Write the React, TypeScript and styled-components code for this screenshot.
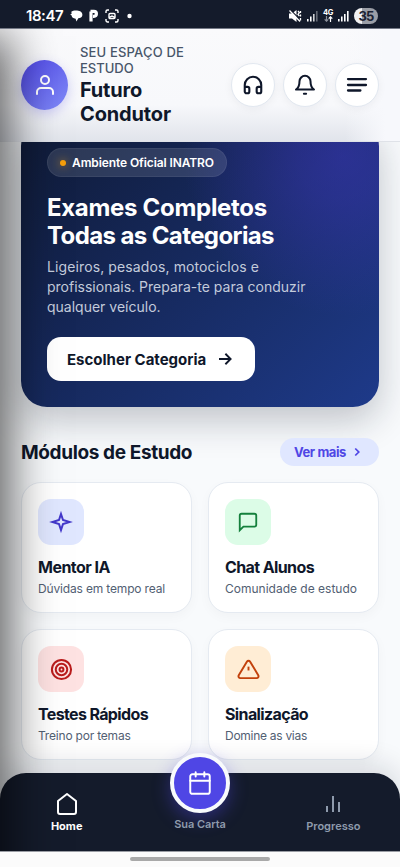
import React from "react";
import styled, { createGlobalStyle } from "styled-components";

const GlobalStyle = createGlobalStyle`
  * { box-sizing: border-box; }
  body { margin: 0; background: #fafafa; font-family: Inter, "Open Sans", sans-serif; }
  button { font: inherit; border: 0; padding: 0; margin: 0; }
  h1, h2, h3, p { margin: 0; }
`;

const Screen = styled.div`
  position: relative;
  display: flex;
  flex-direction: column;
  width: 400px;
  height: 867px;
  overflow: hidden;
  background: #fafafa;
  color: #0f172a;
`;

/* ---------- status bar ---------- */

const StatusBar = styled.div`
  position: relative;
  z-index: 5;
  flex: none;
  height: 28px;
  display: flex;
  align-items: center;
  justify-content: space-between;
  padding: 3px 22px 0 26px;
  background: #141b2b;
  color: #fff;
  box-shadow: 0 1px 0 #747986;
`;

const StatusGroup = styled.div<{ $gap: number }>`
  display: flex;
  align-items: center;
  gap: ${(p) => p.$gap}px;
`;

const Clock = styled.span`
  width: 38px;
  font-size: 15px;
  font-weight: 600;
  letter-spacing: -0.45px;
  line-height: 18px;
`;

const Battery = styled.span`
  width: 24px;
  height: 16px;
  border-radius: 8px;
  background: linear-gradient(90deg, #f1f1f3 0 35%, #9b9ea6 35% 100%);
  color: #1b2232;
  font-size: 13px;
  font-weight: 700;
  letter-spacing: -0.8px;
  line-height: 16px;
  text-align: center;
`;

const NetworkType = styled.span`
  display: flex;
  flex-direction: column;
  align-items: center;
  width: 10px;
  font-size: 7.5px;
  font-weight: 700;
  letter-spacing: -0.3px;
  line-height: 7px;
`;

/* ---------- header ---------- */

const Header = styled.header`
  position: relative;
  z-index: 2;
  flex: none;
  height: 114px;
  display: flex;
  align-items: center;
  padding: 0 21px;
  border-bottom: 1px solid #dfe2e8;
  background:
    linear-gradient(90deg, transparent 345px, #f7f8fc 385px),
    linear-gradient(180deg, #fafafc 0, #f7f8fb 68%, #eceef3 84%, #e1e4eb 100%);
`;

const Avatar = styled.div`
  flex: none;
  display: grid;
  place-items: center;
  width: 47px;
  height: 50px;
  border-radius: 50%;
  background: linear-gradient(135deg, #4f46e5, #818cf8);
  color: #fff;
  box-shadow: 0 4px 12px rgba(79, 70, 229, 0.25);
`;

const Greeting = styled.div`
  width: 130px;
  margin-left: 12px;
`;

const Line = styled.span<{ $ls?: number }>`
  display: block;
  white-space: nowrap;
  letter-spacing: ${(p) => p.$ls ?? 0}px;
`;

const Eyebrow = styled.p`
  font-size: 13px;
  font-weight: 500;
  line-height: 16px;
  color: #475569;
`;

const UserName = styled.h1`
  margin-top: 2px;
  font-size: 20px;
  font-weight: 700;
  line-height: 24px;
`;

const Actions = styled.div`
  display: flex;
  gap: 8px;
  margin-left: auto;
`;

const RoundButton = styled.button`
  display: grid;
  place-items: center;
  width: 44px;
  height: 44px;
  border: 1px solid #e2e8f0;
  border-radius: 50%;
  background: #fff;
  color: #0f172a;
  box-shadow: 0 2px 8px rgba(15, 23, 42, 0.05);
`;

/* ---------- hero ---------- */

const Content = styled.main`
  flex: none;
  height: 631px;
  padding: 0 21px;
  background: #f8fafc;
`;

const Hero = styled.section`
  height: 287px;
  margin-top: -22px;
  padding: 28px 26px 0;
  border-radius: 26px;
  color: #fff;
  background:
    radial-gradient(circle at 322px 36px, rgba(67, 56, 202, 0.45) 0, rgba(67, 56, 202, 0.36) 45px, transparent 160px),
    linear-gradient(135deg, #0f1a35 0%, #1e3a8a 100%);
  box-shadow: 0 14px 36px rgba(15, 23, 42, 0.24);
`;

const Badge = styled.div`
  display: inline-flex;
  align-items: center;
  gap: 6px;
  width: 180px;
  height: 29px;
  padding-left: 12px;
  border: 1px solid rgba(255, 255, 255, 0.06);
  border-radius: 15px;
  background: rgba(255, 255, 255, 0.12);
  font-size: 12px;
  font-weight: 600;
`;

const BadgeDot = styled.i`
  width: 6px;
  height: 6px;
  border-radius: 50%;
  background: #f59e0b;
  box-shadow: 0 0 8px rgba(245, 158, 11, 0.7);
`;

const HeroTitle = styled.h2`
  margin-top: 17px;
  font-size: 24px;
  font-weight: 700;
  line-height: 28px;
`;

const HeroText = styled.p`
  margin-top: 7px;
  font-size: 14px;
  line-height: 19.8px;
  color: #c3cbdb;
`;

const HeroButton = styled.button`
  display: flex;
  align-items: center;
  gap: 10px;
  width: 208px;
  height: 44px;
  margin-top: 21px;
  padding-left: 20px;
  border-radius: 14px;
  background: #fff;
  color: #0f172a;
  font-size: 15px;
  font-weight: 700;
`;

/* ---------- modules ---------- */

const SectionHead = styled.div`
  display: flex;
  align-items: center;
  justify-content: space-between;
  height: 28px;
  margin: 31px 0 16px;
`;

const SectionTitle = styled.h2`
  padding-top: 2px;
  font-size: 19px;
  font-weight: 700;
  line-height: 28px;
`;

const MoreButton = styled.button`
  display: flex;
  align-items: center;
  gap: 4px;
  width: 99px;
  height: 28px;
  padding-left: 14px;
  border-radius: 14px;
  background: #e0e7ff;
  color: #4f46e5;
  font-size: 13px;
  font-weight: 700;
`;

const ModuleGrid = styled.div`
  display: grid;
  grid-template-columns: 1fr 1fr;
  grid-auto-rows: 131px;
  gap: 16px;
`;

const ModuleCard = styled.article`
  padding: 16px;
  border: 1px solid #e5eaf1;
  border-radius: 20px;
  background: #fff;
  box-shadow: 0 4px 12px rgba(15, 23, 42, 0.03);
`;

const ModuleIcon = styled.div<{ $bg: string; $fg: string }>`
  display: grid;
  place-items: center;
  width: 46px;
  height: 46px;
  border-radius: 13px;
  background: ${(p) => p.$bg};
  color: ${(p) => p.$fg};
`;

const ModuleTitle = styled.h3`
  margin-top: 12px;
  font-size: 16px;
  font-weight: 700;
  line-height: 21px;
`;

const ModuleText = styled.p`
  margin-top: 3px;
  font-size: 12px;
  line-height: 16px;
  color: #526073;
`;

/* ---------- bottom navigation ---------- */

const BottomNav = styled.nav`
  position: relative;
  height: 78px;
  display: grid;
  grid-template-columns: repeat(3, 1fr);
  border-radius: 26px 26px 0 0;
  background: #141b2b;
  box-shadow: 0 -8px 28px rgba(15, 23, 42, 0.14);
`;

const NavBackdrop = styled.div`
  flex: none;
  position: relative;
  z-index: 1;
  background: #f8fafc;
`;

const NavItem = styled.button<{ $active?: boolean }>`
  display: flex;
  flex-direction: column;
  align-items: center;
  padding-top: 19px;
  background: none;
  color: ${(p) => (p.$active ? "#fff" : "#8e9aac")};
  font-size: 11px;
  font-weight: ${(p) => (p.$active ? 700 : 600)};
  line-height: 14px;
`;

const NavGlyph = styled.span`
  display: grid;
  place-items: center;
  height: 24px;
  margin-bottom: 3px;
`;

const CenterItem = styled(NavItem)`
  padding-top: 0;
`;

const Fab = styled.span`
  display: grid;
  place-items: center;
  flex: none;
  width: 60px;
  height: 60px;
  margin: -20px 0 4px;
  border: 4px solid #f8fafc;
  border-radius: 50%;
  background: #4f46e5;
  color: #fff;
  box-shadow: 0 6px 18px rgba(79, 70, 229, 0.4);
`;

const GestureBar = styled.div`
  flex: none;
  position: relative;
  z-index: 3;
  height: 16px;
  display: flex;
  justify-content: center;
  padding-top: 5px;
  border-top: 1px solid #9a9da4;
  background: #fbfbfb;
`;

const GestureHandle = styled.i`
  width: 140px;
  height: 4px;
  border-radius: 2px;
  background: #a9a9a9;
`;

/* Closed side drawer: only its shadow reaches the visible page. */
const ClosedDrawer = styled.aside`
  position: absolute;
  z-index: 2;
  left: -300px;
  top: 36px;
  width: 300px;
  height: 880px;
  box-shadow: 10px 0 44px rgba(0, 0, 0, 0.64);
  pointer-events: none;
`;

/* ---------- icons ---------- */

type IconProps = { size?: number; stroke?: number; cap?: "round" | "butt"; children: React.ReactNode };

const Icon = ({ size = 22, stroke = 2, cap = "round", children }: IconProps) => (
  <svg width={size} height={size} viewBox="0 0 24 24" fill="none" stroke="currentColor"
    strokeWidth={stroke} strokeLinecap={cap} strokeLinejoin={cap === "round" ? "round" : "miter"}>
    {children}
  </svg>
);

const SignalIcon = ({ weak }: { weak?: boolean }) => (
  <svg width="11" height="12" viewBox="0 0 11 12" fill="#fff">
    <rect x="0" y="9" width="1.6" height="2.5" />
    <rect x="3" y="6.5" width="1.6" height="5" />
    <rect x="6" y="4" width="1.6" height="7.5" opacity={weak ? 0.8 : 1} />
    <rect x="9" y="1" width="1.6" height="10.5" opacity={weak ? 0.35 : 1} />
  </svg>
);

const modules = [
  {
    title: "Mentor IA", titleLs: -0.52, text: "Dúvidas em tempo real", textLs: -0.16,
    bg: "#e0e7ff", fg: "#4338ca",
    icon: (
      <Icon size={24} cap="butt">
        <path d="M12 4 14 10 20.500 12 14 14 12 20 10 14 3.500 12 10 10z" />
      </Icon>
    ),
  },
  {
    title: "Chat Alunos", titleLs: -0.61, text: "Comunidade de estudo", textLs: 0,
    bg: "#dcfce7", fg: "#15803d",
    icon: (
      <Icon size={22} cap="butt">
        <path d="M21 15a2 2 0 0 1-2 2H7l-4 4V5a2 2 0 0 1 2-2h14a2 2 0 0 1 2 2z" />
      </Icon>
    ),
  },
  {
    title: "Testes Rápidos", titleLs: -0.64, text: "Treino por temas", textLs: -0.2,
    bg: "#fee2e2", fg: "#b91c1c",
    icon: (
      <Icon size={23} stroke={2.1}>
        <circle cx="12" cy="12" r="10" />
        <circle cx="12" cy="12" r="6" />
        <circle cx="12" cy="12" r="2" />
      </Icon>
    ),
  },
  {
    title: "Sinalização", titleLs: -0.62, text: "Domine as vias", textLs: -0.28,
    bg: "#ffedd5", fg: "#c2410c",
    icon: (
      <Icon size={23} cap="butt">
        <path d="M10.290 3.860 1.820 18a2 2 0 0 0 1.710 3h16.940a2 2 0 0 0 1.710-3L13.710 3.860a2 2 0 0 0-3.420 0z" />
        <path d="M12 9v4" />
      </Icon>
    ),
  },
];

export default function App() {
  return (
    <Screen>
      <GlobalStyle />
      <StatusBar>
        <StatusGroup $gap={6}>
          <Clock>18:47</Clock>
          <svg width="13" height="12" viewBox="0 0 13 12" fill="#fff">
            <path d="M1.300 1.700C3 .1 8 .1 10.200 1.300c2.600 1.300 2.900 4.900.8 6.200-.9.600-1.900.7-2.700.8L6.500 11.500 5.600 8.700C3.200 8.500 1.800 7.500 1.600 5.600L.2 4.300l1.500-.5z" />
          </svg>
          <svg width="10" height="13" viewBox="0 0 10 13">
            <path d="M2 12.500V2.500M1.500 2.300h3.400a2.500 2.500 0 0 1 0 5H4" fill="none" stroke="#fff" strokeWidth="3.200" />
          </svg>
          <svg width="14" height="14" viewBox="0 0 14 14" fill="none" stroke="#fff" strokeWidth="1.400">
            <path d="M1 4V2.500A1.500 1.500 0 0 1 2.500 1H4M10 1h1.500A1.500 1.500 0 0 1 13 2.500V4M13 10v1.500a1.500 1.500 0 0 1-1.500 1.500H10M4 13H2.500A1.500 1.500 0 0 1 1 11.500V10" />
            <rect x="4" y="4.500" width="6" height="5" rx="1" />
            <path d="M4 8.500 7 7l3 1.500" />
          </svg>
          <svg width="20" height="6" viewBox="0 0 20 6">
            <circle cx="4.500" cy="3" r="2.200" fill="#fff" />
          </svg>
        </StatusGroup>
        <StatusGroup $gap={5}>
          <svg width="13" height="12" viewBox="0 0 13 12" fill="#fff">
            <path d="M0 3.500h3L7.500 0v12L3 8.500H0z" />
            <path d="M1.500 0 12 10.500" stroke="#141b2b" strokeWidth="1.200" />
            <path d="M.5.5 11 11.500M9 1l1.300 1.700L9 4.400l1.300 1.700M11.500 1v2M11.500 4.500v2M11.500 8v2.500" stroke="#fff" strokeWidth="1.300" fill="none" />
          </svg>
          <SignalIcon weak />
          <NetworkType>
            <span>4G</span>
            <svg width="9" height="6" viewBox="0 0 9 6" fill="none" strokeWidth="1.200">
              <path d="M2.500 0v5M.7 3.300l1.800 1.900 1.800-1.900" stroke="#8b909b" />
              <path d="M6.500 6V1M4.700 2.700 6.500.8l1.800 1.900" stroke="#fff" />
            </svg>
          </NetworkType>
          <SignalIcon />
          <Battery>35</Battery>
        </StatusGroup>
      </StatusBar>

      <Header>
        <Avatar>
          <Icon size={24}>
            <path d="M20 21v-2a4 4 0 0 0-4-4H8a4 4 0 0 0-4 4v2" />
            <circle cx="12" cy="7" r="4" />
          </Icon>
        </Avatar>
        <Greeting>
          <Eyebrow>
            <Line $ls={0.17}>SEU ESPAÇO DE</Line>
            <Line>ESTUDO</Line>
          </Eyebrow>
          <UserName>
            <Line $ls={-0.2}>Futuro</Line>
            <Line $ls={-0.14}>Condutor</Line>
          </UserName>
        </Greeting>
        <Actions>
          <RoundButton aria-label="Suporte">
            <Icon stroke={2.3}>
              <path d="M3 14h3a2 2 0 0 1 2 2v3a2 2 0 0 1-2 2H5a2 2 0 0 1-2-2v-7a9 9 0 0 1 18 0v7a2 2 0 0 1-2 2h-1a2 2 0 0 1-2-2v-3a2 2 0 0 1 2-2h3" />
            </Icon>
          </RoundButton>
          <RoundButton aria-label="Notificações">
            <Icon stroke={2.2}>
              <path d="M18 8A6 6 0 0 0 6 8c0 6-1.500 7.500-3.800 9h19.600C19.500 15.500 18 14 18 8" />
              <path d="M10.800 21.500h2.400" />
            </Icon>
          </RoundButton>
          <RoundButton aria-label="Menu">
            <Icon stroke={2.500}>
              <path d="M2.200 5.500h19.600M2.200 12h19.600M2.200 18h13.500" />
            </Icon>
          </RoundButton>
        </Actions>
      </Header>

      <Content>
        <Hero>
          <Badge>
            <BadgeDot />
            <Line $ls={-0.1}>Ambiente Oficial INATRO</Line>
          </Badge>
          <HeroTitle>
            <Line $ls={-0.3}>Exames Completos</Line>
            <Line $ls={-0.6}>Todas as Categorias</Line>
          </HeroTitle>
          <HeroText>
            <Line $ls={0.11}>Ligeiros, pesados, motociclos e</Line>
            <Line>profissionais. Prepara-te para conduzir</Line>
            <Line>qualquer veículo.</Line>
          </HeroText>
          <HeroButton>
            <Line>Escolher Categoria</Line>
            <Icon size={18} stroke={2.500} cap="butt">
              <path d="M4 12h15M12.500 5l7 7-7 7" />
            </Icon>
          </HeroButton>
        </Hero>

        <SectionHead>
          <SectionTitle>
            <Line $ls={-0.38}>Módulos de Estudo</Line>
          </SectionTitle>
          <MoreButton>
            <Line $ls={-0.41}>Ver mais</Line>
            <Icon size={14} stroke={3} cap="butt">
              <path d="m9 18 6-6-6-6" />
            </Icon>
          </MoreButton>
        </SectionHead>

        <ModuleGrid>
          {modules.map((m) => (
            <ModuleCard key={m.title}>
              <ModuleIcon $bg={m.bg} $fg={m.fg}>{m.icon}</ModuleIcon>
              <ModuleTitle>
                <Line $ls={m.titleLs}>{m.title}</Line>
              </ModuleTitle>
              <ModuleText>
                <Line $ls={m.textLs}>{m.text}</Line>
              </ModuleText>
            </ModuleCard>
          ))}
        </ModuleGrid>
      </Content>

      <NavBackdrop>
        <BottomNav>
          <NavItem $active>
            <NavGlyph>
              <Icon size={24}>
                <path d="m3 9 9-7 9 7v11a2 2 0 0 1-2 2H5a2 2 0 0 1-2-2z" />
              </Icon>
            </NavGlyph>
            <Line>Home</Line>
          </NavItem>
          <CenterItem>
            <Fab>
              <Icon size={26} stroke={1.800}>
                <rect x="3" y="4" width="18" height="18" rx="2" />
                <path d="M16 2v4M8 2v4M3 10h18" />
              </Icon>
            </Fab>
            <Line $ls={-0.08}>Sua Carta</Line>
          </CenterItem>
          <NavItem>
            <NavGlyph>
              <Icon size={24} cap="butt">
                <path d="M18 20V10M12 20V4M6 20v-6" />
              </Icon>
            </NavGlyph>
            <Line>Progresso</Line>
          </NavItem>
        </BottomNav>
      </NavBackdrop>

      <GestureBar>
        <GestureHandle />
      </GestureBar>

      <ClosedDrawer />
    </Screen>
  );
}
